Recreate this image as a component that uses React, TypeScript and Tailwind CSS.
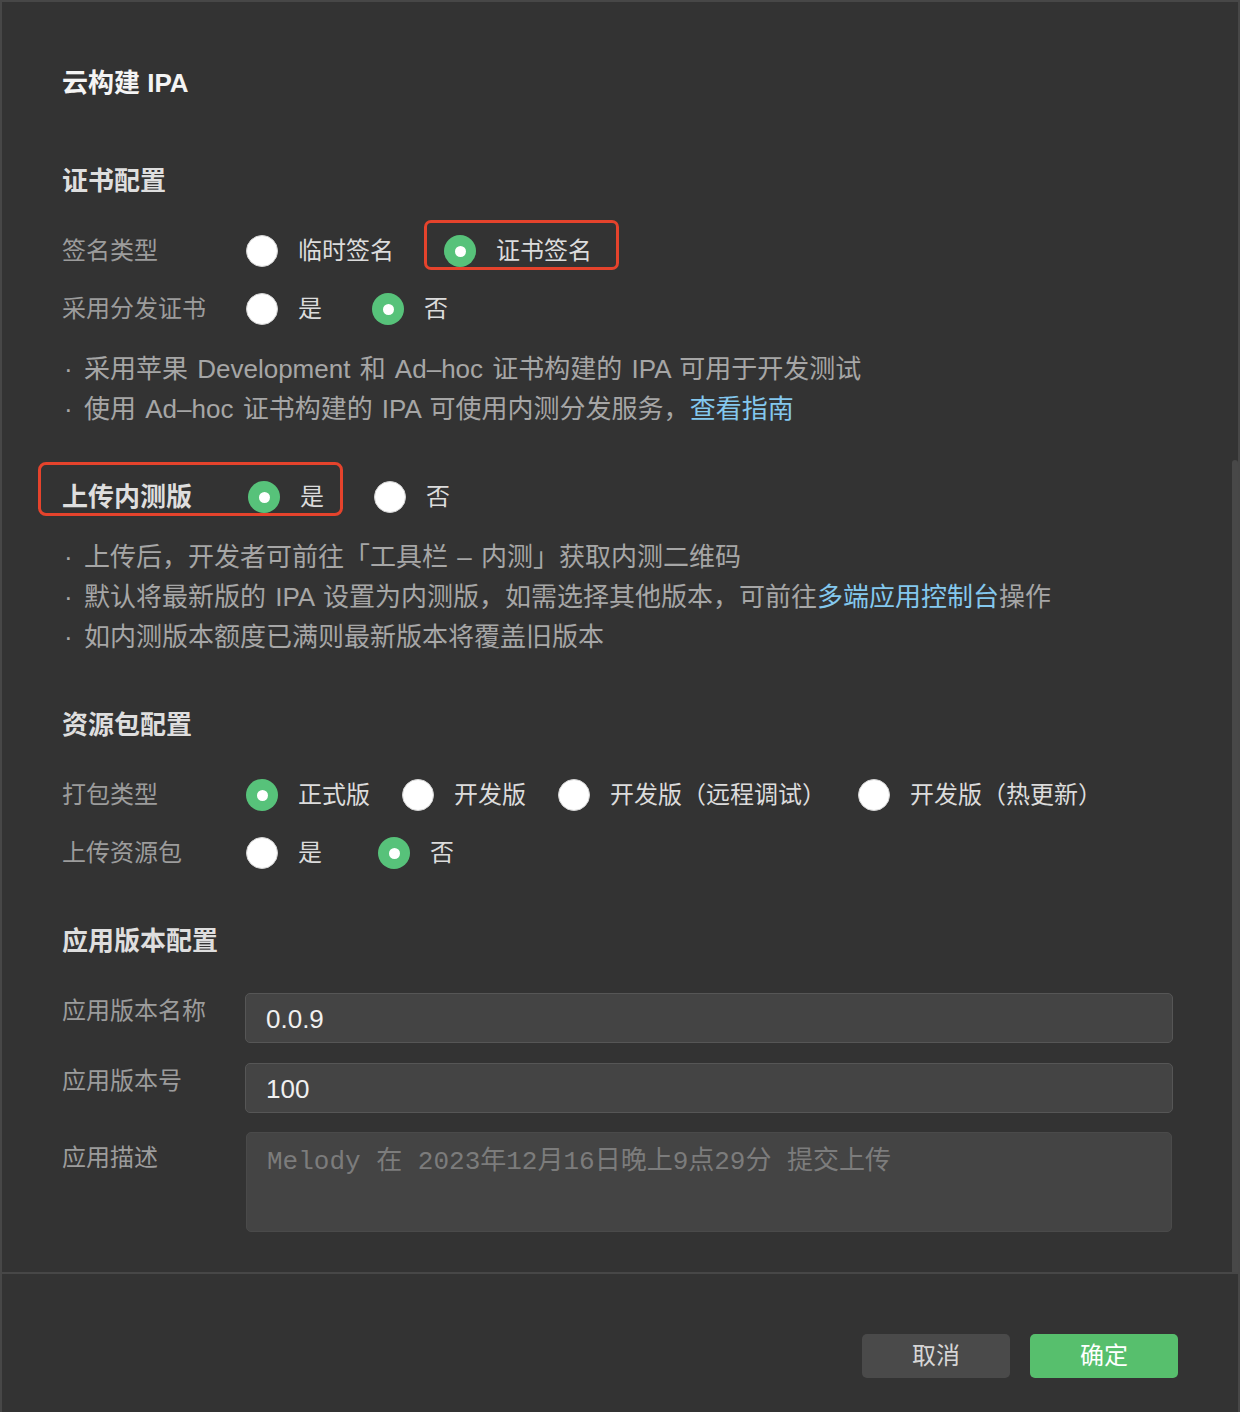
import clsx from "clsx";

function Radio({ checked, label, className }: { checked?: boolean; label: string; className?: string }) {
    return (
        <div className={clsx("flex items-center", className)}>
            <span
                className={clsx(
                    "w-8 h-8 rounded-full flex items-center justify-center shrink-0",
                    checked ? "bg-[#57c27a]" : "bg-white border border-[#d4d4d4]"
                )}
            >
                {checked && <span className="w-[11px] h-[11px] rounded-full bg-white" />}
            </span>
            <span className="ml-5 text-[24px] leading-10 text-[#dcdcdc] whitespace-nowrap">{label}</span>
        </div>
    );
}

function Bullet({ children }: { children: React.ReactNode }) {
    return (
        <div className="flex text-[26px] leading-10 text-[#a6a6a6] whitespace-nowrap [word-spacing:2px]">
            <span className="w-[22px] pl-[2px]">·</span>
            <span>{children}</span>
        </div>
    );
}

export default function App() {
    return (
        <div className="w-[1240px] h-[1412px] bg-[#333333] border-x-2 border-t-2 border-[#474747] flex flex-col font-['Liberation_Sans','Noto_Sans_CJK_SC',sans-serif]">
            <div className="relative h-[1272px] border-b-2 border-[#474747] pl-[60px] pr-[65px] pt-[63px]">
                <h1 className="text-[26px] leading-9 font-semibold text-[#f4f4f4]">云构建 IPA</h1>

                {/* 证书配置 */}
                <h2 className="mt-[62px] text-[26px] leading-9 font-semibold text-[#dedede]">证书配置</h2>
                <div className="relative mt-8 flex items-center h-10">
                    <span className="w-[184px] text-[24px] text-[#9c9c9c]">签名类型</span>
                    <Radio label="临时签名" className="mr-[50px]" />
                    <Radio label="证书签名" checked />
                    <div className="absolute left-[362px] top-[-11px] w-[195px] h-[50px] border-[3px] border-[#e5432c] rounded-[7px]" />
                </div>
                <div className="mt-[18px] flex items-center h-10">
                    <span className="w-[184px] text-[24px] text-[#9c9c9c]">采用分发证书</span>
                    <Radio label="是" className="mr-[50px]" />
                    <Radio label="否" checked />
                </div>
                <div className="mt-5">
                    <Bullet>采用苹果 Development 和 Ad–hoc 证书构建的 IPA 可用于开发测试</Bullet>
                    <Bullet>
                        使用 Ad–hoc 证书构建的 IPA 可使用内测分发服务，<span className="text-[#84c8ee]">查看指南</span>
                    </Bullet>
                </div>

                {/* 上传内测版 */}
                <div className="relative mt-12 flex items-center h-10">
                    <span className="w-[186px] text-[26px] font-semibold text-[#dedede]">上传内测版</span>
                    <Radio label="是" checked className="mr-[50px]" />
                    <Radio label="否" />
                    <div className="absolute left-[-24px] top-[-15px] w-[305px] h-[54px] border-[3px] border-[#e5432c] rounded-[8px]" />
                </div>
                <div className="mt-5">
                    <Bullet>上传后，开发者可前往「工具栏 – 内测」获取内测二维码</Bullet>
                    <Bullet>
                        默认将最新版的 IPA 设置为内测版，如需选择其他版本，可前往<span className="text-[#84c8ee]">多端应用控制台</span>操作
                    </Bullet>
                    <Bullet>如内测版本额度已满则最新版本将覆盖旧版本</Bullet>
                </div>

                {/* 资源包配置 */}
                <h2 className="mt-[50px] text-[26px] leading-9 font-semibold text-[#dedede]">资源包配置</h2>
                <div className="mt-8 flex items-center h-10">
                    <span className="w-[184px] text-[24px] text-[#9c9c9c]">打包类型</span>
                    <Radio label="正式版" checked className="mr-8" />
                    <Radio label="开发版" className="mr-8" />
                    <Radio label="开发版（远程调试）" className="mr-8" />
                    <Radio label="开发版（热更新）" />
                </div>
                <div className="mt-[18px] flex items-center h-10">
                    <span className="w-[184px] text-[24px] text-[#9c9c9c]">上传资源包</span>
                    <Radio label="是" className="mr-[56px]" />
                    <Radio label="否" checked />
                </div>

                {/* 应用版本配置 */}
                <h2 className="mt-[50px] text-[26px] leading-9 font-semibold text-[#dedede]">应用版本配置</h2>
                <div className="mt-[34px] flex">
                    <span className="w-[183px] text-[24px] leading-9 text-[#9c9c9c]">应用版本名称</span>
                    <input
                        readOnly
                        defaultValue="0.0.9"
                        className="flex-1 h-[50px] bg-[#444444] border border-[#565656] rounded-[5px] pl-5 pt-[2px] text-[26px] text-[#f0f0f0] outline-none"
                    />
                </div>
                <div className="mt-5 flex">
                    <span className="w-[183px] text-[24px] leading-9 text-[#9c9c9c]">应用版本号</span>
                    <input
                        readOnly
                        defaultValue="100"
                        className="flex-1 h-[50px] bg-[#444444] border border-[#565656] rounded-[5px] pl-5 pt-[2px] text-[26px] text-[#f0f0f0] outline-none"
                    />
                </div>
                <div className="mt-[19px] flex">
                    <span className="w-[184px] pt-2 text-[24px] leading-9 text-[#9c9c9c]">应用描述</span>
                    <textarea
                        readOnly
                        placeholder="Melody 在 2023年12月16日晚上9点29分 提交上传"
                        className="flex-1 mr-[1px] h-[100px] resize-none bg-[#444444] border border-[#4a4a4a] rounded-[5px] pl-5 pt-[14px] text-[26px] leading-[30px] font-['Liberation_Mono','Noto_Sans_CJK_SC',monospace] placeholder:text-[#7c7c7c] outline-none"
                    />
                </div>

                <div className="absolute right-0 top-[458px] bottom-0 w-[6px] bg-[#484848] rounded-t-[3px]" />
            </div>

            <div className="flex justify-end gap-5 pt-[60px] pr-[60px]">
                <button className="w-[148px] h-[44px] rounded-[5px] bg-[#4a4a4a] text-[24px] text-[#d6d6d6]">取消</button>
                <button className="w-[148px] h-[44px] rounded-[5px] bg-[#57bf6d] text-[24px] text-white">确定</button>
            </div>
        </div>
    );
}
